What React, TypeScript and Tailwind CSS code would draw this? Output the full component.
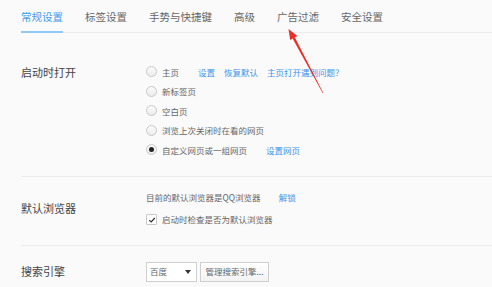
import React from 'react'

const tabs = ['常规设置', '标签设置', '手势与快捷键', '高级', '广告过滤', '安全设置']

const startup = [
  { label: '主页', checked: false, links: ['设置', '恢复默认', '主页打开遇到问题？'] },
  { label: '新标签页', checked: false, links: [] },
  { label: '空白页', checked: false, links: [] },
  { label: '浏览上次关闭时在看的网页', checked: false, links: [] },
  { label: '自定义网页或一组网页', checked: true, links: ['设置网页'] },
]

function Radio({ checked }: { checked: boolean }) {
  return (
    <span className="w-[11px] h-[11px] rounded-full border border-[#c8c8c8] bg-gradient-to-b from-[#fbfbfb] to-[#ececec] flex items-center justify-center shrink-0">
      {checked && <span className="w-[5px] h-[5px] rounded-full bg-[#222]" />}
    </span>
  )
}

export default function App() {
  return (
    <div
      className="relative w-[492px] h-[287px] overflow-hidden bg-[#fafafa] text-[#555]"
      style={{ fontFamily: '"Noto Sans CJK SC", "Noto Sans", sans-serif' }}
    >
      {/* 标签栏 */}
      <div className="ml-[21px] h-[33px] flex items-stretch gap-[22px] border-b border-[#ececec]">
        {tabs.map((t, i) => (
          <div
            key={t}
            className={`flex items-center pt-[3px] text-[10.5px] leading-none ${
              i === 0 ? 'text-[#3d9bf2] border-b-2 border-[#92c8f6] -mb-px' : 'text-[#666]'
            }`}
          >
            {t}
          </div>
        ))}
      </div>

      {/* 启动时打开 */}
      <div className="ml-[21px] pt-[29px] pb-[16px] border-b border-[#ececec] flex">
        <div className="w-[125px] h-[19.5px] flex items-center text-[11px] text-[#444]">启动时打开</div>
        <div className="flex flex-col">
          {startup.map((r) => (
            <div key={r.label} className="h-[19.5px] flex items-center text-[8.5px] leading-none">
              <Radio checked={r.checked} />
              <span className="ml-[5px] text-[#666] whitespace-nowrap">{r.label}</span>
              {r.links.length > 0 && (
                <span className="ml-[19px] flex gap-[9px] text-[#3b95ee] whitespace-nowrap">
                  {r.links.map((l) => (
                    <span key={l}>{l}</span>
                  ))}
                </span>
              )}
            </div>
          ))}
        </div>
      </div>

      {/* 默认浏览器 */}
      <div className="ml-[21px] pt-[10px] pb-[14px] border-b border-[#ececec] flex">
        <div className="w-[125px] h-[44px] flex items-center text-[11px] text-[#444]">默认浏览器</div>
        <div className="flex flex-col text-[8.5px] leading-none">
          <div className="h-[22px] flex items-center text-[#666]">
            <span>目前的默认浏览器是QQ浏览器</span>
            <span className="ml-[18px] text-[#3b95ee]">解锁</span>
          </div>
          <div className="h-[22px] flex items-center text-[#666]">
            <span className="w-[11px] h-[11px] border border-[#c8c8c8] bg-white rounded-[1px] flex items-center justify-center">
              <svg width="8" height="8" viewBox="0 0 8 8">
                <path d="M1.3 4.2 L3.2 6 L6.8 2" fill="none" stroke="#333" strokeWidth="1.2" />
              </svg>
            </span>
            <span className="ml-[5px]">启动时检查是否为默认浏览器</span>
          </div>
        </div>
      </div>

      {/* 搜索引擎 */}
      <div className="ml-[21px] pt-[16px] flex">
        <div className="w-[125px] h-[20px] flex items-center text-[11px] text-[#444]">搜索引擎</div>
        <div className="flex gap-[3px] text-[8.5px] leading-none text-[#666]">
          <div className="w-[51px] h-[20px] border border-[#cfcfcf] bg-white flex items-center justify-between pl-[3px] pr-[5px]">
            <span>百度</span>
            <svg width="6" height="4" viewBox="0 0 6 4">
              <path d="M0 0 L6 0 L3 4 Z" fill="#333" />
            </svg>
          </div>
          <div className="w-[69px] h-[20px] border border-[#cfcfcf] bg-gradient-to-b from-white to-[#f3f3f3] flex items-center justify-center">
            管理搜索引擎...
          </div>
        </div>
      </div>

      {/* 红色箭头 */}
      <svg className="absolute left-0 top-0 pointer-events-none" width="492" height="287">
        <polygon points="288.5,29 297.4,36 290.2,40" fill="#e8302a" />
        <polygon points="294.8,37.2 292.6,38.4 322.8,93.2 323.3,92.9" fill="#e8302a" />
      </svg>
    </div>
  )
}
